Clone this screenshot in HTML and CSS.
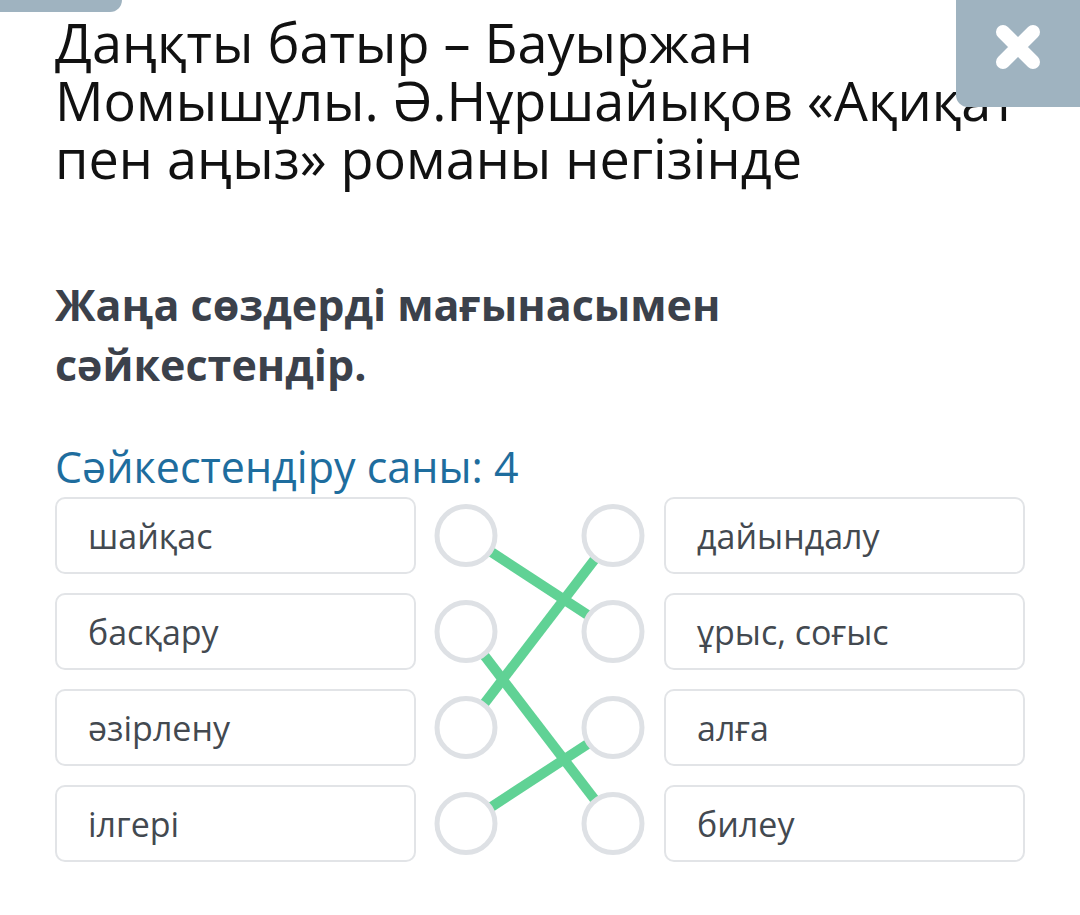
FILE: index.html
```html
<!doctype html>
<html>
<head>
    <meta charset="utf-8">
    <title>Сәйкестендіру</title>
    <link rel="stylesheet" href="styles.css">
</head>
<body>
    <div class="tab"></div>
    <button class="close" type="button" aria-label="Жабу">
        <svg width="46" height="46" viewBox="0 0 46 46">
            <path d="M8 8 L38 38 M38 8 L8 38" stroke="#fff" stroke-width="14" stroke-linecap="round" />
        </svg>
    </button>

    <main class="page">
        <h1 class="title">Даңқты батыр – Бауыржан Момышұлы. Ә.Нұршайықов «Ақиқат пен аңыз» романы негізінде</h1>

        <h2 class="task">Жаңа сөздерді мағынасымен сәйкестендір.</h2>

        <div class="count">Сәйкестендіру саны: 4</div>

        <div class="match">
            <div class="item left">шайқас</div>
            <svg class="links" width="248" height="365" viewBox="0 0 248 365">
                <g stroke="#60d295" stroke-width="10">
                    <line x1="50" y1="38.5" x2="197" y2="134.5" />
                    <line x1="197" y1="38.5" x2="50" y2="230.5" />
                    <line x1="50" y1="134.5" x2="197" y2="326.5" />
                    <line x1="50" y1="326.5" x2="197" y2="230.5" />
                </g>
                <g fill="#fff" stroke="#dee1e5" stroke-width="5">
                    <circle cx="50" cy="38.5" r="29" />
                    <circle cx="50" cy="134.5" r="29" />
                    <circle cx="50" cy="230.5" r="29" />
                    <circle cx="50" cy="326.5" r="29" />
                    <circle cx="197" cy="38.5" r="29" />
                    <circle cx="197" cy="134.5" r="29" />
                    <circle cx="197" cy="230.5" r="29" />
                    <circle cx="197" cy="326.5" r="29" />
                </g>
            </svg>
            <div class="item right">дайындалу</div>

            <div class="item left">басқару</div>
            <div class="item right">ұрыс, соғыс</div>

            <div class="item left">әзірлену</div>
            <div class="item right">алға</div>

            <div class="item left">ілгері</div>
            <div class="item right">билеу</div>
        </div>
    </main>
</body>
</html>
```

FILE: styles.css
```css
body {
    margin: 0;
    background: #fff;
    font-family: "Open Sans", "Noto Sans", sans-serif;
}

.tab {
    position: absolute;
    top: 0;
    left: 0;
    width: 122px;
    height: 12px;
    background: #9fb3c0;
    border-bottom-right-radius: 12px;
}

.close {
    position: absolute;
    top: 0;
    right: 0;
    width: 124px;
    height: 107px;
    padding: 24px 0 0;
    border: 0;
    background: #9fb3c0;
    border-bottom-left-radius: 12px;
    display: flex;
    justify-content: center;
    align-items: flex-start;
}

.page {
    padding: 13px 55px 0;
}

.title {
    margin: 0;
    font-size: 54px;
    line-height: 58px;
    font-weight: 400;
    color: #111;
}

.task {
    margin: 88px 0 0;
    font-size: 43px;
    line-height: 60px;
    font-weight: 700;
    color: #3b414b;
}

.count {
    margin-top: 47px;
    font-size: 43px;
    line-height: 50px;
    color: #1e6d9e;
}

.match {
    margin-top: 5px;
    display: grid;
    grid-template-columns: 361px 1fr 361px;
    grid-auto-rows: 77px;
    row-gap: 19px;
}

.links {
    grid-column: 2;
    grid-row: 1 / 5;
    display: block;
}

.item {
    display: flex;
    align-items: center;
    padding-left: 31px;
    border: 2px solid #e2e4e7;
    border-radius: 10px;
    font-size: 34px;
    color: #434950;
}

.item.left {
    grid-column: 1;
}

.item.right {
    grid-column: 3;
}
```
